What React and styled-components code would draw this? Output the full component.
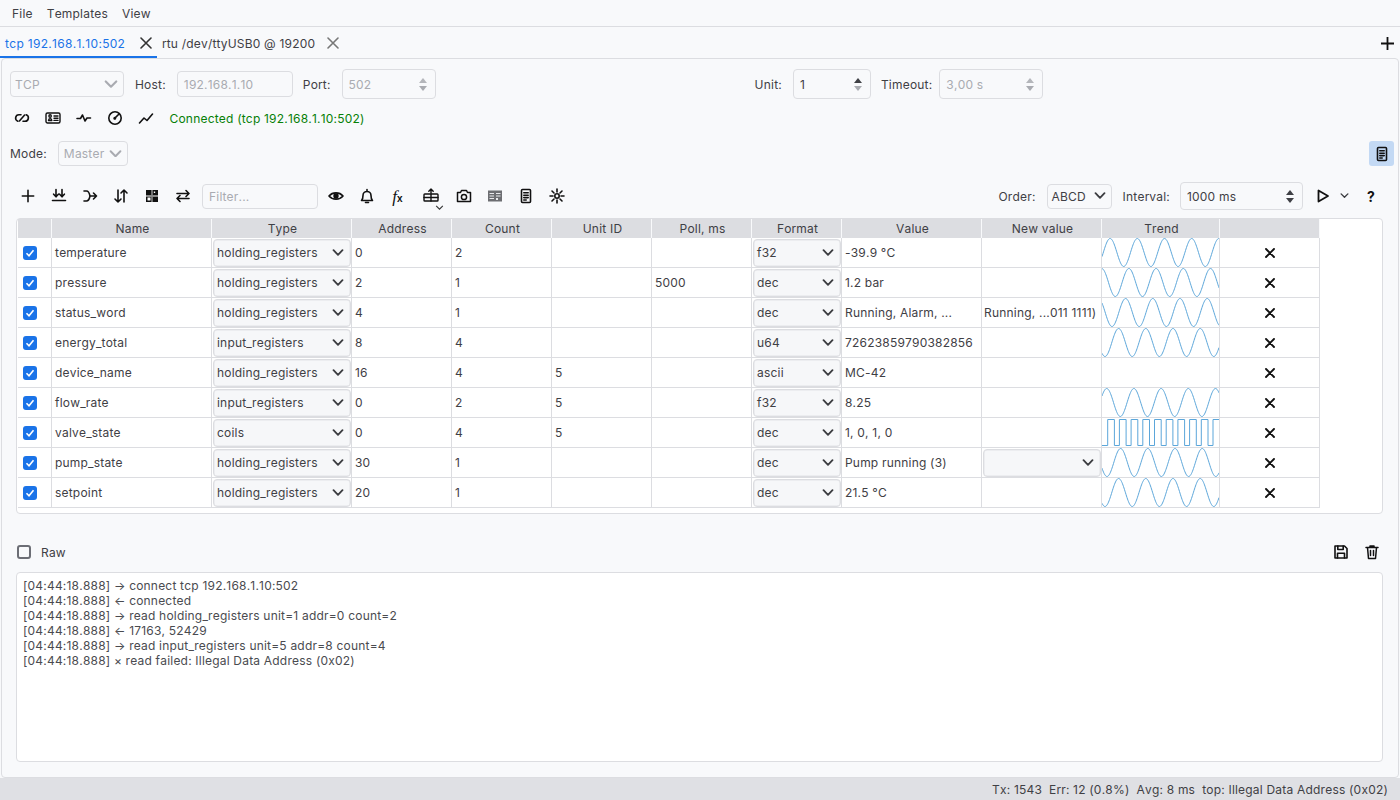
import React from 'react';
import styled, { createGlobalStyle } from 'styled-components';

const Global = createGlobalStyle`
  html, body { margin: 0; padding: 0; height: 100%; overflow: hidden; background: #f8f9fb; }
  body { font-family: Inter, "Noto Sans", sans-serif; font-size: 12px; color: #3f4045; letter-spacing: 0.2px; font-kerning: none; }
  #root { height: 100%; }
`;

const Page = styled.div`display: flex; flex-direction: column; width: 1400px; height: 800px;`;
const MenuBar = styled.div`display: flex; gap: 14px; height: 26px; padding: 0 12px; align-items: center; border-bottom: 1px solid #dcdde1; box-sizing: content-box;`;
const MenuItem = styled.span`color: #3f4045;`;
const TabBar = styled.div`display: flex; height: 31px; align-items: stretch; position: relative; z-index: 1;`;
const Tab = styled.div`
  display: flex; align-items: center; height: 31px; box-sizing: border-box; padding: 3px 0 0 ${p => p.$pl}px;
  width: ${p => p.$w}px; gap: ${p => p.$gap}px; letter-spacing: ${p => (p.$active ? 0.3 : 0.2)}px;
  color: ${p => (p.$active ? '#1a73e8' : '#3f4045')};
  border-bottom: 2px solid ${p => (p.$active ? '#1a73e8' : 'transparent')};
`;
const TabClose = styled.svg`width: 12px; height: 12px; flex: none; color: ${p => (p.$active ? '#333' : '#777')};`;
const AddTab = styled.svg`width: 13px; height: 13px; margin: 2px 6px 0 auto; align-self: center;`;

const Panel = styled.div`
  flex: 1; margin-left: 1px; margin-right: 1px; border: 1px solid #dcdde1; border-radius: 4px;
  background: #f8f9fb; padding: 10px 14px 15px 8px; display: flex; flex-direction: column; min-height: 0;
`;
const ConnRow = styled.div`display: flex; align-items: center; height: 30px;`;
const Label = styled.span`color: #3f4045; margin: 0 ${p => p.$mr ?? 10}px 0 ${p => p.$ml ?? 11}px;`;
const Field = styled.div`
  display: flex; align-items: center; box-sizing: border-box; height: ${p => p.$h ?? 26}px; width: ${p => p.$w}px;
  border: 1px solid #dcdde1; border-radius: 4px; padding: 0 5px 0 ${p => p.$pl ?? 6}px;
  color: ${p => (p.$off ? '#a9abb1' : '#3f4045')}; background: #f8f9fb; flex: none; justify-content: space-between;
`;
const Spin = styled.span`display: flex; flex-direction: column; gap: 3px; margin-right: 3px;`;
const Tri = styled.i`
  display: block; width: 0; height: 0; border-left: 4.5px solid transparent; border-right: 4.5px solid transparent;
  ${p => (p.$up ? 'border-bottom' : 'border-top')}: 5px solid ${p => p.$c};
`;
const ActionRow = styled.div`display: flex; align-items: center; height: 24px; margin: 7px 0 0 -3.5px;`;
const IconBtn = styled.div`
  width: ${p => p.$w ?? 31}px; height: 24px; flex: none; display: flex; align-items: center; justify-content: center; color: #111;
  position: relative;
`;
const PlayBtn = styled(IconBtn)`margin-left: 11px;`;
const HelpBtn = styled(IconBtn)`margin-left: 3px;`;
const StatusText = styled.span`color: #078007; margin-left: 8px;`;
const ModeRow = styled.div`display: flex; align-items: center; height: 25px; margin: 11px -10px 0 0; justify-content: space-between;`;
const ModeLeft = styled.div`display: flex; align-items: center;`;
const ToggleBtn = styled.div`width: 25px; height: 25px; border-radius: 3px; background: #c3d9f4; display: flex; align-items: center; justify-content: center; color: #111;`;
const Toolbar = styled.div`display: flex; align-items: center; height: 28px; margin: 16px 1px 0 0; padding-left: 2px;`;
const Filter = styled(Field)`margin: 0 2px 0 4px;`;
const Grow = styled.div`flex: 1;`;
const Fx = styled.span`font-family: "Liberation Serif", serif; font-style: italic; font-size: 17px; color: #111; letter-spacing: 0; line-height: 1;
  small { font-size: 10px; font-family: "Liberation Sans", sans-serif; font-style: normal; font-weight: 700; }`;
const SubChevron = styled.svg`position: absolute; left: 22px; top: 21px; width: 9px; height: 5px;`;
const HelpMark = styled.span`font-weight: 700; font-size: 14px; color: #111;`;

const TableBox = styled.div`
  margin: 8px 1px 0 6px; border: 1px solid #dcdde1; border-radius: 4px; background: #fff; padding: 0 1px 5px; height: 296px; box-sizing: border-box;
`;
const cols = '34px 160px 140px 100px 100px 100px 100px 90px 140px 120px 118px 100px';
const HeadRow = styled.div`display: grid; grid-template-columns: ${cols}; height: 19px;`;
const HeadCell = styled.div`
  background: #dcdde1; border-right: 1px solid #f8f9fb; display: flex; align-items: center; justify-content: center; color: #3f4045;
  box-sizing: border-box; padding-left: 2px;
`;
const Row = styled.div`display: grid; grid-template-columns: ${cols}; height: 30px;`;
const Cell = styled.div`
  border-right: 1px solid #dcdde1; border-bottom: 1px solid #dcdde1; display: flex; align-items: center; justify-content: ${p => (p.$center ? 'center' : 'flex-start')};
  padding-left: ${p => (p.$center ? 0 : p.$pl ?? 3)}px; box-sizing: border-box; white-space: nowrap; overflow: hidden; color: #3f4045;
`;
const CellSelect = styled.div`
  display: flex; align-items: center; justify-content: space-between; box-sizing: border-box; width: calc(100% - 1px); height: 28px; margin-left: 1px;
  background: #f6f7f9; border: 1px solid #dcdde1; border-radius: 4px; padding: 0 6px 0 3px; box-shadow: 0 0 0 0.5px #e2e3e7 inset;
`;
const CheckBox = styled.span`
  width: 14px; height: 14px; border-radius: 3px; box-sizing: border-box; display: flex; align-items: center; justify-content: center;
  background: ${p => (p.$on ? '#1a73e8' : 'transparent')}; border: ${p => (p.$on ? 'none' : '2px solid #6c6e75')}; flex: none;
`;
const Chevron = styled.svg`width: ${p => p.$s ?? 12}px; height: ${p => (p.$s ?? 12) * 0.6}px; flex: none; color: ${p => p.$c ?? '#3b3c40'};`;
const Spark = styled.svg`display: block; width: 117px; height: 29px;`;
const RawRow = styled.div`display: flex; align-items: center; height: 24px; margin: 26px 1px 0 0; padding-left: 7px; justify-content: space-between;`;
const RawLeft = styled.div`display: flex; align-items: center; gap: 10px;`;
const RawIcons = styled.div`display: flex; align-items: center; margin-right: -4px;`;
const LogBox = styled.div`
  margin: 8px 1px 0 6px; height: 190px; box-sizing: border-box; background: #fff; border: 1px solid #dcdde1; border-radius: 4px; padding: 5px 6px; line-height: 15px; color: #4a4b50;
`;
const LogLine = styled.div`white-space: pre;`;
const StatusBar = styled.div`height: 22px; background: #dfe0e4; display: flex; align-items: center; justify-content: flex-end; gap: 7px; padding: 0 12px; color: #3f4045; flex: none;`;

const Ic = ({ children, s = 16, fill = 'none', sw = 1.6 }) => (
  <svg width={s} height={s} viewBox="0 0 16 16" fill={fill} stroke="currentColor" strokeWidth={sw} strokeLinecap="round" strokeLinejoin="round">{children}</svg>
);
const Chev = (p) => (
  <Chevron {...p} viewBox="0 0 12 7.2" fill="none" stroke="currentColor" strokeWidth="1.8" strokeLinecap="round" strokeLinejoin="round"><path d="M1.5 1.2 6 5.8l4.5-4.6" /></Chevron>
);
const X = ({ s = 10 }) => (
  <svg width={s} height={s} viewBox="0 0 10 10" fill="none" stroke="#111" strokeWidth="1.9" strokeLinecap="round"><path d="M1 1l8 8M9 1 1 9" /></svg>
);

const I = {
  link: <Ic><path d="M3.800 11.200A3.300 3.300 0 0 1 5 4.800h2M9 11.200h2a3.300 3.300 0 0 0 1.200-6.400M5.400 11l5.200-6" /></Ic>,
  card: <Ic sw={1.4}><rect x="1" y="3" width="14" height="10" rx="1.5" /><path d="M3.500 10.500c.3-2.500 3-2.500 3.300 0zM9 6h4M9 8.200h4M9 10.400h4" /><circle cx="5.100" cy="6" r="1.200" /></Ic>,
  pulse: <Ic><path d="M1 8.500h3.500L6.500 5l2.500 6 2-3h3.500" /></Ic>,
  gauge: <Ic><circle cx="8" cy="8" r="6.200" /><path d="M7.600 8.400 11.500 4.500" /><circle cx="7.800" cy="8.200" r=".7" /></Ic>,
  trend: <Ic><path d="M1.500 13 6 8l3 2.500L14.500 4" /></Ic>,
  plus: <Ic s={14} sw={1.8}><path d="M8 1.500v13M1.500 8h13" /></Ic>,
  dl: <Ic><path d="M5 1.500v7M11 1.500v7M2.600 6.200 5 8.800l2.400-2.600M8.600 6.200l2.400 2.600 2.400-2.600M1.500 12.500h13" /></Ic>,
  merge: <Ic><path d="M2 3h2.500c2.200 0 3 2.500 3.500 5-.5 2.500-1.300 5-3.500 5H2M8 8h6.500M11.500 5l3 3-3 3" /></Ic>,
  sort: <Ic><path d="M5 2v12M2 11l3 3 3-3M11 14V2M8 5l3-3 3 3" /></Ic>,
  grid: <Ic sw={0} fill="#111"><path d="M2 2h12v12H2z" /><path fill="#fff" d="M7.600 2v12h.8V2zM2 7.600h12v.8H2zM3.500 9.500h3v3h-3zM9.800 3.500h1.400v1.400H9.800z" /></Ic>,
  swap: <Ic><path d="M2 5.500h12M11 2.500l3 3-3 3M14 10.500H2M5 7.500l-3 3 3 3" /></Ic>,
  eye: <Ic sw={1.6}><path d="M1 8c3.500-4.200 10.500-4.200 14 0-3.500 4.200-10.500 4.200-14 0z" /><circle cx="8" cy="8" r="1.900" fill="#111" /></Ic>,
  bell: <Ic sw={1.6}><path d="M2.500 12.500c1.500-1.500 1.500-3 1.500-5a4 4 0 0 1 8 0c0 2 0 3.500 1.500 5zM6.500 14.500h3M8 1.500v2" /></Ic>,
  upload: <Ic sw={1.4}><rect x="1" y="6" width="14" height="7" rx=".8" /><path d="M1 9.500h14M8 6v7M8 5V1M5.800 3.200 8 1l2.200 2.200" /></Ic>,
  camera: <Ic sw={1.5}><path d="M1.500 4.500h3l1-2h5l1 2h3v9h-13z" /><circle cx="8" cy="9" r="2.600" /></Ic>,
  book: <Ic sw={0} fill="#6d6e72"><path d="M1 2.500h14v11H1z" /><path fill="#e8e9ec" d="M2.500 5h4.500v1H2.500zM9 5h4.500v1H9zM2.500 7.500h4.500v1H2.500zM9 7.500h4.500v1H9zM2.500 10h4.500v1H2.500zM9 10h2v2H9z" /></Ic>,
  doc: <Ic sw={1.6}><rect x="3.500" y="1.500" width="9" height="13" rx="1" /><path d="M5.800 4.800h4.400M5.800 7.200h4.400M5.800 9.600h4.400M5.800 12h2.400" /></Ic>,
  sun: <Ic sw={1.6}><circle cx="8" cy="8" r="2.200" /><path d="M8 1v3M8 12v3M1 8h3M12 8h3M3 3l2 2M11 11l2 2M13 3l-2 2M5 11l-2 2" /></Ic>,
  play: <Ic sw={1.8}><path d="M3.500 2.500v11L13 8z" /></Ic>,
  save: <Ic sw={1.6}><path d="M2 2h9.500L14 4.500V14H2z" /><path d="M4.800 2v3.500h5.400V2M4.500 14V9.200h7V14" /></Ic>,
  trash: <Ic sw={1.5}><path d="M2 3.500h12M6 3.500V2h4v1.500M3.500 3.500 4.500 14.500h7l1-11" /><path d="M6.500 6.500v5M9.500 6.500v5" /></Ic>,
};

const wave = (t) => {
  let d = '';
  for (let x = 0; x <= 117; x += 0.5) {
    const y = 14.5 + 14 * Math.cos((2 * Math.PI * (x - t)) / 27.2);
    d += `${x === 0 ? 'M' : 'L'}${x} ${y.toFixed(2)}`;
  }
  return d;
};
const square = () => {
  let d = 'M0 27.500H5.700';
  for (let x = 5.7; x < 117; x += 11.7) {
    d += `V1.500H${Math.min(x + 6.7, 117)}`;
    if (x + 6.7 < 117) d += `V27.500H${Math.min(x + 11.7, 117)}`;
  }
  return d;
};

const rows = [
  ['temperature', 'holding_registers', '0', '2', '', '', 'f32', '-39.9 °C', '', 21.7],
  ['pressure', 'holding_registers', '2', '1', '', '5000', 'dec', '1.2 bar', '', 13.3],
  ['status_word', 'holding_registers', '4', '1', '', '', 'dec', 'Running, Alarm, ...', 'Running, ...011 1111)', 10],
  ['energy_total', 'input_registers', '8', '4', '', '', 'u64', '72623859790382856', '', 3],
  ['device_name', 'holding_registers', '16', '4', '5', '', 'ascii', 'MC-42', '', null],
  ['flow_rate', 'input_registers', '0', '2', '5', '', 'f32', '8.25', '', 18.3],
  ['valve_state', 'coils', '0', '4', '5', '', 'dec', '1, 0, 1, 0', '', 'sq'],
  ['pump_state', 'holding_registers', '30', '1', '', '', 'dec', 'Pump running (3)', 'select', 5],
  ['setpoint', 'holding_registers', '20', '1', '', '', 'dec', '21.5 °C', '', 3],
];
const heads = ['', 'Name', 'Type', 'Address', 'Count', 'Unit ID', 'Poll, ms', 'Format', 'Value', 'New value', 'Trend', ''];
const log = [
  '[04:44:18.888] → connect tcp 192.168.1.10:502',
  '[04:44:18.888] ← connected',
  '[04:44:18.888] → read holding_registers unit=1 addr=0 count=2',
  '[04:44:18.888] ← 17163, 52429',
  '[04:44:18.888] → read input_registers unit=5 addr=8 count=4',
  '[04:44:18.888] × read failed: Illegal Data Address (0x02)',
];

const SpinBox = ({ w, h = 30, value, off, upDark, pl }) => (
  <Field $w={w} $h={h} $off={off} $pl={pl}>
    {value}
    <Spin>
      <Tri $up $c={off ? '#b4b6bb' : '#3f4045'} />
      <Tri $c={upDark ? '#3f4045' : '#a9abb1'} />
    </Spin>
  </Field>
);

const CloseX = ({ active }) => (
  <TabClose $active={active} viewBox="0 0 12 12" fill="none" stroke="currentColor" strokeWidth="1.6" strokeLinecap="round"><path d="M1 1l10 10M11 1 1 11" /></TabClose>
);

export default function App() {
  return (
    <Page>
      <Global />
      <MenuBar>
        <MenuItem>File</MenuItem>
        <MenuItem>Templates</MenuItem>
        <MenuItem>View</MenuItem>
      </MenuBar>
      <TabBar>
        <Tab $active $w={157} $pl={5} $gap={15}>tcp 192.168.1.10:502<CloseX active /></Tab>
        <Tab $w={190} $pl={5} $gap={12}>rtu /dev/ttyUSB0 @ 19200<CloseX /></Tab>
        <AddTab viewBox="0 0 13 13" fill="none" stroke="#111" strokeWidth="1.8"><path d="M6.500 0v13M0 6.500h13" /></AddTab>
      </TabBar>
      <Panel>
        <ConnRow>
          <Field $w={114} $off $pl={4}>TCP<Chev $s={14} $c="#a9abb1" /></Field>
          <Label $mr={11}>Host:</Label>
          <Field $w={116} $off>192.168.1.10</Field>
          <Label $ml={10} $mr={11}>Port:</Label>
          <SpinBox w={94} value="502" off />
          <Label $ml={319} $mr={11}>Unit:</Label>
          <SpinBox w={78} value="1" upDark={false} />
          <Label $ml={10} $mr={7}>Timeout:</Label>
          <SpinBox w={104} value="3,00 s" off />
        </ConnRow>
        <ActionRow>
          <IconBtn>{I.link}</IconBtn>
          <IconBtn>{I.card}</IconBtn>
          <IconBtn>{I.pulse}</IconBtn>
          <IconBtn>{I.gauge}</IconBtn>
          <IconBtn>{I.trend}</IconBtn>
          <StatusText>Connected (tcp 192.168.1.10:502)</StatusText>
        </ActionRow>
        <ModeRow>
          <ModeLeft>
            <Label $ml={0} $mr={11}>Mode:</Label>
            <Field $w={70} $h={25} $off $pl={5}>Master<Chev $s={13} $c="#a9abb1" /></Field>
          </ModeLeft>
          <ToggleBtn>{I.doc}</ToggleBtn>
        </ModeRow>
        <Toolbar>
          <IconBtn>{I.plus}</IconBtn>
          <IconBtn>{I.dl}</IconBtn>
          <IconBtn>{I.merge}</IconBtn>
          <IconBtn>{I.sort}</IconBtn>
          <IconBtn>{I.grid}</IconBtn>
          <IconBtn>{I.swap}</IconBtn>
          <Filter $w={116} $h={25} $off>Filter...</Filter>
          <IconBtn>{I.eye}</IconBtn>
          <IconBtn>{I.bell}</IconBtn>
          <IconBtn><Fx>f<small>x</small></Fx></IconBtn>
          <IconBtn $w={35}>{I.upload}<SubChevron viewBox="0 0 10 6" fill="none" stroke="#333" strokeWidth="1.300"><path d="M1 1l4 4 4-4" /></SubChevron></IconBtn>
          <IconBtn>{I.camera}</IconBtn>
          <IconBtn>{I.book}</IconBtn>
          <IconBtn>{I.doc}</IconBtn>
          <IconBtn>{I.sun}</IconBtn>
          <Grow />
          <Label $mr={11}>Order:</Label>
          <Field $w={65} $h={25} $pl={4}>ABCD<Chev $s={12} /></Field>
          <Label $ml={11} $mr={10}>Interval:</Label>
          <SpinBox w={123} h={28} value="1000 ms" upDark pl={6} />
          <PlayBtn $w={18}>{I.play}</PlayBtn>
          <IconBtn $w={24}><Chev $s={9} /></IconBtn>
          <HelpBtn $w={24}><HelpMark>?</HelpMark></HelpBtn>
        </Toolbar>
        <TableBox>
          <HeadRow>{heads.map((h, i) => <HeadCell key={i}>{h}</HeadCell>)}</HeadRow>
          {rows.map((r) => (
            <Row key={r[0]}>
              <Cell $pl={5}><CheckBox $on><svg width="10" height="10" viewBox="0 0 10 10" fill="none" stroke="#fff" strokeWidth="1.600"><path d="M1.500 5.200 4 7.700 8.500 2.300" /></svg></CheckBox></Cell>
              <Cell>{r[0]}</Cell>
              <Cell $pl={0}><CellSelect>{r[1]}<Chev $s={12} /></CellSelect></Cell>
              <Cell>{r[2]}</Cell>
              <Cell>{r[3]}</Cell>
              <Cell>{r[4]}</Cell>
              <Cell>{r[5]}</Cell>
              <Cell $pl={0}><CellSelect>{r[6]}<Chev $s={12} /></CellSelect></Cell>
              <Cell>{r[7]}</Cell>
              <Cell $pl={r[8] === 'select' ? 0 : 2}>{r[8] === 'select' ? <CellSelect><span /><Chev $s={12} /></CellSelect> : r[8]}</Cell>
              <Cell $pl={0}>
                {r[9] !== null && (
                  <Spark viewBox="0 0 117 29" fill="none" stroke="#5ba6da" strokeWidth="1">
                    <path d={r[9] === 'sq' ? square() : wave(r[9])} />
                  </Spark>
                )}
              </Cell>
              <Cell $center><X /></Cell>
            </Row>
          ))}
        </TableBox>
        <RawRow>
          <RawLeft><CheckBox />Raw</RawLeft>
          <RawIcons>
            <IconBtn>{I.save}</IconBtn>
            <IconBtn>{I.trash}</IconBtn>
          </RawIcons>
        </RawRow>
        <LogBox>{log.map((l, i) => <LogLine key={i}>{l}</LogLine>)}</LogBox>
      </Panel>
      <StatusBar>
        <span>Tx: 1543</span><span>Err: 12 (0.8%)</span><span>Avg: 8 ms</span><span>top: Illegal Data Address (0x02)</span>
      </StatusBar>
    </Page>
  );
}
